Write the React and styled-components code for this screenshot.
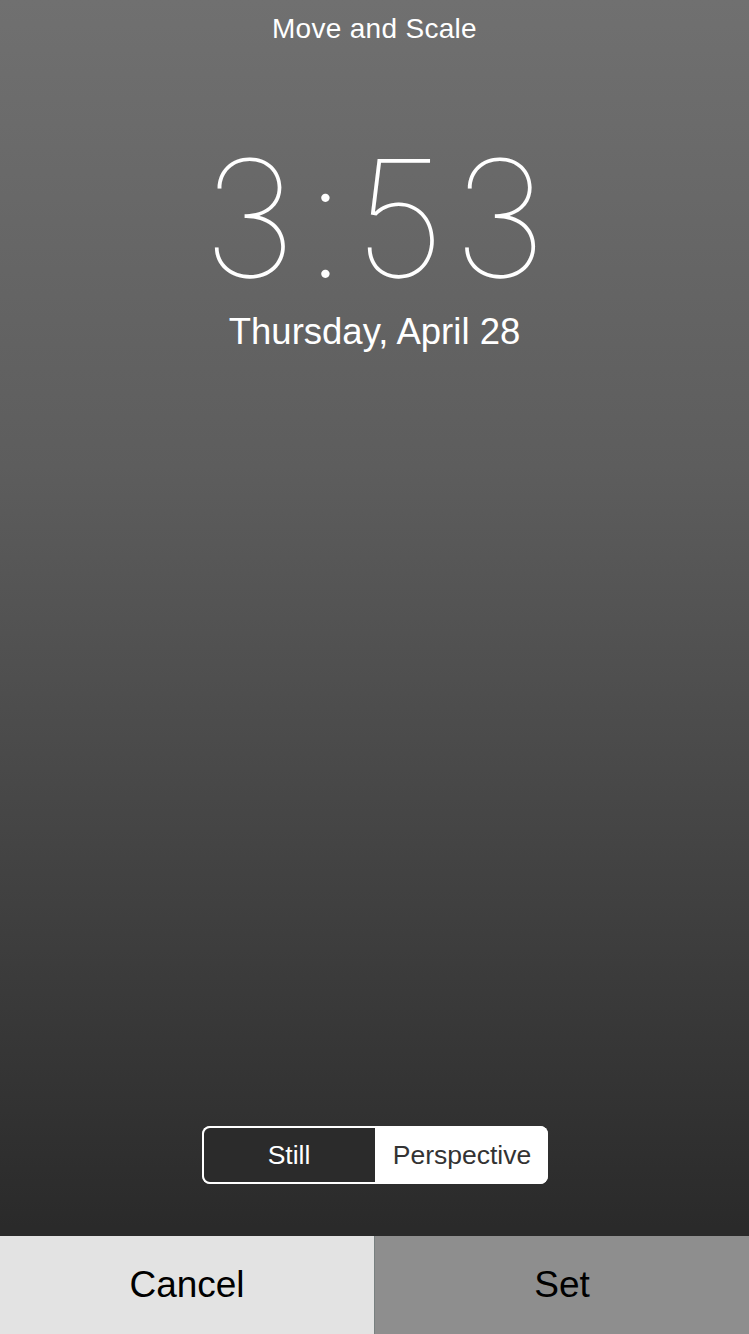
import React from "react"
import styled, { createGlobalStyle } from "styled-components"

const Global = createGlobalStyle`
  html, body { margin: 0; padding: 0; }
  body { font-family: "Liberation Sans", Arial, sans-serif; }
`

const App = () => {
  return (
    <>
      <Global />
      <Screen>
        <Title>Move and Scale</Title>
        <Time>3:53</Time>
        <DateLine>Thursday, April 28</DateLine>
        <Spacer />
        <Segmented>
          <Segment active>Still</Segment>
          <Segment>Perspective</Segment>
        </Segmented>
        <Bottom>
          <BarButton>Cancel</BarButton>
          <BarButton primary>Set</BarButton>
        </Bottom>
      </Screen>
    </>
  )
}

export default App

const Screen = styled.div`
  width: 749px;
  height: 1334px;
  display: flex;
  flex-direction: column;
  align-items: center;
  background: linear-gradient(180deg, #707070 0%, #5d5d5d 35%, #3e3e3e 70%, #2a2a2a 92%, #2a2a2a 100%);
  overflow: hidden;
`
const Title = styled.div`
  margin-top: 12px;
  color: #fff;
  font-size: 28px;
  line-height: 34px;
  letter-spacing: 0.3px;
`
const Time = styled.div`
  margin-top: 87px;
  padding-left: 7px;
  color: #fff;
  font-family: Inter, "Noto Sans", sans-serif;
  font-weight: 100;
  font-size: 162px;
  line-height: 170px;
  letter-spacing: 7px;
`
const DateLine = styled.div`
  margin-top: 7px;
  color: #fff;
  font-size: 36.5px;
  line-height: 44px;
`
const Spacer = styled.div`
  flex: 1;
`
const Segmented = styled.div`
  display: flex;
  width: 346px;
  height: 58px;
  margin-bottom: 52px;
  border-radius: 8px;
  overflow: hidden;
  background: #fff;
`
const Segment = styled.div`
  flex: 1;
  display: flex;
  align-items: center;
  justify-content: center;
  font-size: 26.5px;
  color: ${p => (p.active ? "#fff" : "#333")};
  background: ${p => (p.active ? "#2b2b2b" : "#fff")};
  border: ${p => (p.active ? "2px solid #fff" : "none")};
  border-radius: ${p => (p.active ? "8px 0 0 8px" : "0")};
`
const Bottom = styled.div`
  display: flex;
  width: 100%;
  height: 98px;
`
const BarButton = styled.div`
  flex: 1;
  display: flex;
  align-items: center;
  justify-content: center;
  font-size: 37px;
  color: #000;
  background: ${p => (p.primary ? "#8e8e8e" : "#e3e3e3")};
  border-left: ${p => (p.primary ? "1px solid #788080" : "none")};
`
